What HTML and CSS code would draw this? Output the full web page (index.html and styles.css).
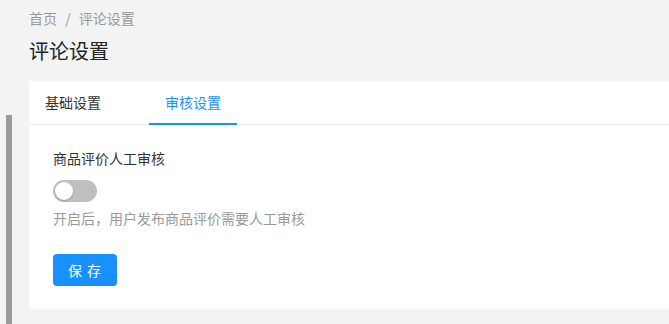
FILE: index.html
```html
<!DOCTYPE html>
<html lang="zh-CN">
<head>
    <meta charset="UTF-8">
    <meta name="viewport" content="width=device-width, initial-scale=1.0">
    <title>评论设置</title>
    <link rel="stylesheet" href="styles.css">
</head>
<body>
    <div class="layout">
        <div class="side">
            <div class="scroll-thumb"></div>
        </div>
        <div class="main">
            <div class="breadcrumb">
                <span>首页</span>
                <span class="sep">/</span>
                <span>评论设置</span>
            </div>
            <h1 class="page-title">评论设置</h1>

            <div class="card">
                <div class="tabs">
                    <div class="tab">基础设置</div>
                    <div class="tab active">审核设置</div>
                </div>
                <div class="card-body">
                    <div class="label">商品评价人工审核</div>
                    <div class="switch"><span class="knob"></span></div>
                    <p class="help">开启后，用户发布商品评价需要人工审核</p>
                    <button class="btn-primary">保 存</button>
                </div>
            </div>
        </div>
    </div>
</body>
</html>
```

FILE: styles.css
```css
/* Geral */
body {
    margin: 0;
    background-color: #f3f3f3;
    font-family: "Noto Sans CJK SC", "Noto Sans", sans-serif;
    font-size: 14px;
    color: #333;
    overflow: hidden;
}

.layout {
    display: flex;
    height: 324px;
}

/* Barra lateral (rolagem) */
.side {
    width: 6px;
    padding-left: 6px;
    padding-top: 115px;
    flex-shrink: 0;
}

.scroll-thumb {
    width: 6px;
    height: 100%;
    background-color: #9a9a9a;
}

.main {
    flex: 1;
    padding: 7px 0 0 17px;
    min-width: 0;
}

/* Breadcrumb e título */
.breadcrumb {
    line-height: 22px;
    color: #999;
    font-size: 14px;
}

.breadcrumb .sep {
    margin: 0 5px;
}

.page-title {
    margin: 10px 0 0;
    font-size: 20px;
    font-weight: normal;
    line-height: 24px;
    color: #222;
}

/* Card */
.card {
    margin-top: 18px;
    background-color: #fff;
}

.tabs {
    display: flex;
    gap: 32px;
    border-bottom: 1px solid #e8e8e8;
}

.tab {
    padding: 10px 16px;
    line-height: 22px;
    border-bottom: 2px solid transparent;
    margin-bottom: -1px;
    color: #333;
    cursor: pointer;
}

.tab.active {
    color: #1890ff;
    border-bottom-color: #1890ff;
}

.card-body {
    padding: 22px 24px 23px;
}

.label {
    line-height: 22px;
    color: #333;
}

/* Switch */
.switch {
    margin-top: 11px;
    width: 44px;
    height: 22px;
    border-radius: 11px;
    background-color: #bfbfbf;
    display: flex;
    align-items: center;
    padding-left: 2px;
    box-sizing: border-box;
}

.knob {
    width: 18px;
    height: 18px;
    border-radius: 50%;
    background-color: #fff;
    box-shadow: 0 1px 2px rgba(0, 0, 0, 0.2);
}

.help {
    margin: 5px 0 0;
    line-height: 22px;
    color: #999;
}

/* Botão */
.btn-primary {
    margin-top: 25px;
    width: 64px;
    height: 32px;
    border: none;
    border-radius: 4px;
    background-color: #1890ff;
    color: #fff;
    font-family: inherit;
    font-size: 14px;
    letter-spacing: 1px;
    cursor: pointer;
}
```
